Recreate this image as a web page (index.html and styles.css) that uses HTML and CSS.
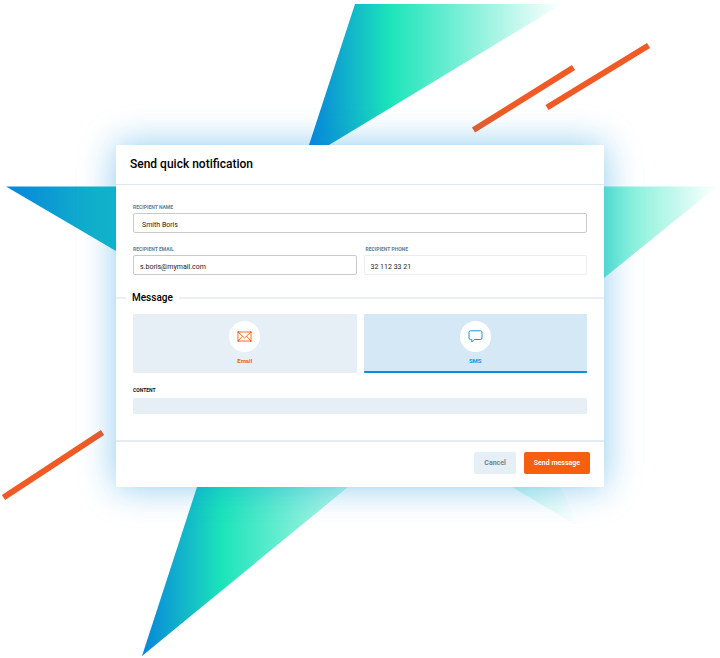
FILE: index.html
```html
<!DOCTYPE html>
<html lang="en">
<head>
<meta charset="utf-8">
<meta name="viewport" content="width=device-width, initial-scale=1">
<title>Send quick notification</title>
<link rel="stylesheet" href="styles.css">
</head>
<body>
<main class="stage">
  <svg class="backdrop" viewBox="0 0 720 658" aria-hidden="true">
    <defs>
      <linearGradient id="top" gradientUnits="userSpaceOnUse" x1="309" y1="0" x2="562" y2="0">
        <stop offset="0" stop-color="#0785da"/>
        <stop offset=".32" stop-color="#1ce4ba"/>
        <stop offset="1" stop-color="#1ce4ba" stop-opacity="0"/>
      </linearGradient>
      <linearGradient id="bottom" gradientUnits="userSpaceOnUse" x1="142" y1="0" x2="400" y2="0">
        <stop offset="0" stop-color="#0785da"/>
        <stop offset=".31" stop-color="#1ce4ba"/>
        <stop offset="1" stop-color="#1ce4ba" stop-opacity="0"/>
      </linearGradient>
      <linearGradient id="left" gradientUnits="userSpaceOnUse" x1="6" y1="0" x2="116" y2="0">
        <stop offset="0" stop-color="#0785da"/>
        <stop offset="1" stop-color="#13bcc6"/>
      </linearGradient>
      <linearGradient id="right" gradientUnits="userSpaceOnUse" x1="604" y1="0" x2="718" y2="0">
        <stop offset="0" stop-color="#1ce4ba" stop-opacity=".68"/>
        <stop offset="1" stop-color="#1ce4ba" stop-opacity="0"/>
      </linearGradient>
      <linearGradient id="tip" gradientUnits="userSpaceOnUse" x1="512" y1="0" x2="578" y2="0">
        <stop offset="0" stop-color="#1ce4ba" stop-opacity=".25"/>
        <stop offset="1" stop-color="#1ce4ba" stop-opacity="0"/>
      </linearGradient>
    </defs>
    <path fill="url(#top)" d="M355 4H562L329 145L309 145Z"/>
    <path fill="url(#left)" d="M6 186.500H116V251Z"/>
    <path fill="url(#right)" d="M604 186.500H717L604 278Z"/>
    <path fill="url(#bottom)" d="M197 487H348L142 656Z"/>
    <path fill="url(#tip)" d="M512 487H561L578 526Z"/>
    <g stroke="#f15a24" stroke-width="6">
      <path d="M473.500 130L573.500 67.500"/>
      <path d="M547 107.500L648.500 45.500"/>
      <path d="M3.500 497.500L102.500 432.500"/>
    </g>
  </svg>

  <form class="dialog">
    <header class="dialog-header">
      <h1>Send quick notification</h1>
    </header>

    <div class="fields">
      <div class="field field-wide">
        <label for="name">RECIPIENT NAME</label>
        <input id="name" type="text" value="Smith Boris">
      </div>
      <div class="field">
        <label for="email">RECIPIENT EMAIL</label>
        <input id="email" type="email" value="s.boris@mymail.com">
      </div>
      <div class="field field-quiet">
        <label for="phone">RECIPIENT PHONE</label>
        <input id="phone" type="tel" value="32 112 33 21">
      </div>
    </div>

    <h2 class="divider">Message</h2>

    <div class="channels">
      <button class="channel channel-email" type="button" aria-pressed="false">
        <span class="disc">
          <svg width="15" height="11" viewBox="0 0 15 11" fill="none" stroke="currentColor" aria-hidden="true">
            <path d="M1 1H14V10H1ZM1 1L7.500 7L14 1M1 10L5.500 5.200M14 10L9.500 5.200" stroke-width=".9"/>
            <path d="M.5 1H2M13 1H14.500M.5 10H2M13 10H14.500" stroke-width="1.500"/>
          </svg>
        </span>
        Email
      </button>
      <button class="channel channel-sms" type="button" aria-pressed="true">
        <span class="disc">
          <svg width="15" height="13" viewBox="0 0 15 13" fill="none" stroke="currentColor" stroke-linejoin="round" aria-hidden="true">
            <path d="M2.500 .8H12.500Q14 .8 14 2.300V8Q14 9.500 12.500 9.500H6.300L3.800 12V9.500H2.500Q1 9.500 1 8V2.300Q1 .8 2.500 .8Z"/>
          </svg>
        </span>
        SMS
      </button>
    </div>

    <div class="content">
      <label for="content">CONTENT</label>
      <input id="content" type="text">
    </div>

    <footer class="dialog-footer">
      <button class="btn btn-plain" type="button">Cancel</button>
      <button class="btn btn-primary" type="submit">Send message</button>
    </footer>
  </form>
</main>
</body>
</html>
```
FILE: styles.css
```css
* {
  box-sizing: border-box;
}

body {
  margin: 0;
  background: #fff;
  color: #000;
  font-family: Roboto, "Liberation Sans", sans-serif;
}

input,
button {
  margin: 0;
  font-family: inherit;
}

.stage {
  position: relative;
  padding: 145px 116px 171px;
}

.backdrop {
  position: absolute;
  inset: 0;
  width: 100%;
  height: 100%;
}

.dialog {
  position: relative;
  background: #fff;
  box-shadow: 0 0 34px rgba(7, 140, 220, 0.46);
}

.dialog-header {
  display: flex;
  align-items: center;
  height: 40px;
  padding: 0 14px 2px;
  border-bottom: 1px solid #dde7f0;
}

h1 {
  margin: 0;
  font-size: 12px;
  font-weight: 500;
}

.fields {
  display: grid;
  grid-template-columns: 1fr 1fr;
  gap: 12px 7px;
  padding: 18px 17px 0;
}

.field,
.content {
  display: flex;
  flex-direction: column;
  gap: 2px;
}

.field-wide {
  grid-column: 1 / -1;
}

label {
  color: #5f7f95;
  font-size: 5px;
  font-weight: 700;
  line-height: 8px;
}

.field-quiet label {
  padding-left: 2px;
}

.field input {
  width: 100%;
  height: 20px;
  padding: 4px 6px 0;
  border: 1px solid #c8cacc;
  border-radius: 2px;
  background: #fff;
  color: #222;
  font-size: 7px;
}

.field-wide input {
  padding-left: 8px;
}

.field-quiet input {
  border-color: #ebedef;
}

.divider {
  display: flex;
  align-items: center;
  gap: 6px;
  margin: 17px 0 10px;
  font-size: 10px;
  font-weight: 500;
  line-height: 12px;
}

.divider::before,
.divider::after {
  content: "";
  height: 2px;
  background: #e8eff6;
}

.divider::before {
  width: 10px;
}

.divider::after {
  flex: 1;
}

.channels {
  display: grid;
  grid-template-columns: 1fr 1fr;
  gap: 7px;
  padding: 0 17px;
}

.channel {
  display: flex;
  flex-direction: column;
  align-items: center;
  gap: 4px;
  height: 59px;
  padding: 7px 0 0;
  border: 0;
  border-radius: 1px;
  font-size: 6px;
  font-weight: 700;
  line-height: 10px;
}

.channel-email {
  background: #e6eef6;
  color: #f95f16;
}

.channel-sms {
  border-bottom: 2px solid #0690e0;
  background: #d5e8f6;
  color: #1199e0;
}

.disc {
  display: grid;
  place-items: center;
  width: 31px;
  height: 31px;
  border-radius: 50%;
  background: #fff;
}

.content {
  gap: 4px;
  padding: 13px 17px 26px;
}

.content label {
  color: #111;
}

.content input {
  width: 100%;
  height: 16px;
  padding: 0 6px;
  border: 0;
  border-radius: 1px;
  background: #e6eef6;
  font-size: 7px;
}

.dialog-footer {
  display: flex;
  justify-content: flex-end;
  gap: 8px;
  padding: 10px 14px 13px;
  border-top: 2px solid #e4ecf3;
}

.btn {
  height: 22px;
  padding: 0 10px;
  border: 0;
  border-radius: 2px;
  font-size: 7px;
  font-weight: 600;
}

.btn-plain {
  background: #e6eef6;
  color: #5f7f95;
}

.btn-primary {
  background: #f65f0e;
  color: #fff;
}
```
